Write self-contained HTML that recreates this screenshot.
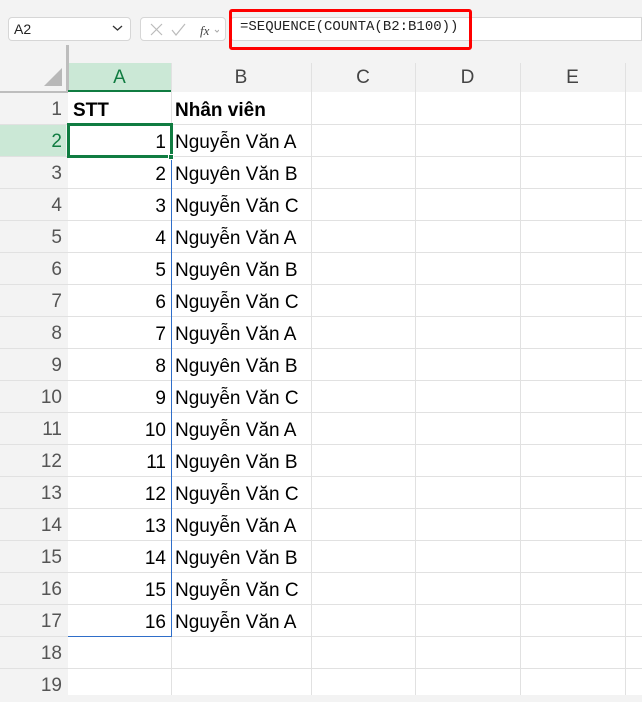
<!DOCTYPE html><html><head><style>
*{margin:0;padding:0;box-sizing:border-box}
body{width:642px;height:695px;overflow:hidden;background:#f3f3f3;font-family:"Liberation Sans",Arial,sans-serif;position:relative}
.abs{position:absolute}
.nb{left:8px;top:17px;width:123px;height:24px;background:#fff;border:1px solid #d6d6d6;border-radius:4px;font-size:14px;padding:3px 0 0 5px;color:#222}
.fxb{left:140px;top:17px;width:86px;height:24px;background:#fff;border:1px solid #d6d6d6;border-radius:4px}
.fin{left:230px;top:17px;width:412px;height:24px;background:#fff;border:1px solid #d6d6d6;border-radius:4px 0 0 4px}
.red{left:229px;top:9px;width:243px;height:41px;border:3px solid #f00;border-radius:3px}
.ftxt{left:240px;top:19px;font-family:"Liberation Mono",monospace;font-size:14px;color:#222}
.grid{left:68px;top:92px;width:574px;height:603px;background:#fff}
.hl{position:absolute;height:1px;background:#e1e1e1}
.vl{position:absolute;width:1px;background:#e1e1e1}
.ch{position:absolute;top:63px;height:29px;font-size:19px;color:#444;text-align:center;line-height:29px}
.rh{position:absolute;left:0;width:62px;text-align:right;font-size:19px;color:#555;line-height:32px;height:32px;padding-top:2px}
.c{position:absolute;font-size:19px;color:#000;line-height:32px;height:32px;padding-top:2px}
</style></head><body>
<div class="abs nb">A2<svg class="abs" style="left:103px;top:6px" width="11" height="8"><path d="M1 2l4.5 4 4.5-4" stroke="#333" stroke-width="1.3" fill="none"/></svg></div>
<div class="abs fxb"><svg class="abs" style="left:8px;top:4px" width="70" height="16"><path d="M2 2l11 11M13 2L2 13" stroke="#bbb" stroke-width="1.2"/><path d="M23 8l4 5 9-11" stroke="#bbb" stroke-width="1.2" fill="none"/><text x="51" y="13" font-size="13" font-style="italic" font-family="Liberation Serif" fill="#444">fx</text><path d="M66 8l2 2 2-2" stroke="#aaa" fill="none"/></svg></div>
<div class="abs fin"></div>
<div class="abs red"></div>
<div class="abs ftxt">=SEQUENCE(COUNTA(B2:B100))</div>
<div class="abs" style="left:66px;top:45px;width:3px;height:47px;background:#bdbdbd"></div>
<div class="abs" style="left:0;top:91px;width:68px;height:2px;background:#bdbdbd"></div>
<svg class="abs" style="left:42px;top:66px" width="22" height="22"><path d="M20 2V20H2Z" fill="#b8b8b8"/></svg>
<div class="abs" style="left:69px;top:63px;width:102px;height:29px;background:#cbe8d6"></div>
<div class="abs" style="left:68px;top:90px;width:104px;height:3px;background:#107c41"></div>
<div class="abs" style="left:0;top:125px;width:66px;height:32px;background:#cbe8d6"></div>
<div class="abs grid"></div>
<div class="ch" style="left:68px;width:103px;color:#107c41">A</div>
<div class="ch" style="left:171px;width:140px">B</div>
<div class="ch" style="left:311px;width:104px">C</div>
<div class="ch" style="left:415px;width:105px">D</div>
<div class="ch" style="left:520px;width:105px">E</div>
<div class="vl" style="left:171px;top:63px;height:29px"></div><div class="vl" style="left:311px;top:63px;height:632px"></div><div class="vl" style="left:415px;top:63px;height:632px"></div><div class="vl" style="left:520px;top:63px;height:632px"></div><div class="vl" style="left:625px;top:63px;height:632px"></div>
<div class="vl" style="left:171px;top:92px;height:603px"></div>
<div class="hl" style="left:0;top:124px;width:642px"></div><div class="hl" style="left:0;top:156px;width:642px"></div><div class="hl" style="left:0;top:188px;width:642px"></div><div class="hl" style="left:0;top:220px;width:642px"></div><div class="hl" style="left:0;top:252px;width:642px"></div><div class="hl" style="left:0;top:284px;width:642px"></div><div class="hl" style="left:0;top:316px;width:642px"></div><div class="hl" style="left:0;top:348px;width:642px"></div><div class="hl" style="left:0;top:380px;width:642px"></div><div class="hl" style="left:0;top:412px;width:642px"></div><div class="hl" style="left:0;top:444px;width:642px"></div><div class="hl" style="left:0;top:476px;width:642px"></div><div class="hl" style="left:0;top:508px;width:642px"></div><div class="hl" style="left:0;top:540px;width:642px"></div><div class="hl" style="left:0;top:572px;width:642px"></div><div class="hl" style="left:0;top:604px;width:642px"></div><div class="hl" style="left:0;top:636px;width:642px"></div><div class="hl" style="left:0;top:668px;width:642px"></div>
<div class="rh" style="top:92px">1</div><div class="rh" style="top:124px;color:#107c41">2</div><div class="rh" style="top:156px">3</div><div class="rh" style="top:188px">4</div><div class="rh" style="top:220px">5</div><div class="rh" style="top:252px">6</div><div class="rh" style="top:284px">7</div><div class="rh" style="top:316px">8</div><div class="rh" style="top:348px">9</div><div class="rh" style="top:380px">10</div><div class="rh" style="top:412px">11</div><div class="rh" style="top:444px">12</div><div class="rh" style="top:476px">13</div><div class="rh" style="top:508px">14</div><div class="rh" style="top:540px">15</div><div class="rh" style="top:572px">16</div><div class="rh" style="top:604px">17</div><div class="rh" style="top:636px">18</div><div class="rh" style="top:668px">19</div>
<div class="c" style="left:73px;top:93px;font-weight:bold">STT</div>
<div class="c" style="left:175px;top:93px;font-weight:bold">Nhân viên</div>
<div class="abs" style="left:68px;top:156px;width:104px;height:481px;border:1px solid #2f6ec9;border-top:none;border-left:none"></div>
<div class="c" style="left:70px;width:96px;text-align:right;top:125px">1</div><div class="c" style="left:175px;top:125px">Nguyễn Văn A</div>
<div class="c" style="left:70px;width:96px;text-align:right;top:157px">2</div><div class="c" style="left:175px;top:157px">Nguyên Văn B</div>
<div class="c" style="left:70px;width:96px;text-align:right;top:189px">3</div><div class="c" style="left:175px;top:189px">Nguyễn Văn C</div>
<div class="c" style="left:70px;width:96px;text-align:right;top:221px">4</div><div class="c" style="left:175px;top:221px">Nguyễn Văn A</div>
<div class="c" style="left:70px;width:96px;text-align:right;top:253px">5</div><div class="c" style="left:175px;top:253px">Nguyên Văn B</div>
<div class="c" style="left:70px;width:96px;text-align:right;top:285px">6</div><div class="c" style="left:175px;top:285px">Nguyễn Văn C</div>
<div class="c" style="left:70px;width:96px;text-align:right;top:317px">7</div><div class="c" style="left:175px;top:317px">Nguyễn Văn A</div>
<div class="c" style="left:70px;width:96px;text-align:right;top:349px">8</div><div class="c" style="left:175px;top:349px">Nguyên Văn B</div>
<div class="c" style="left:70px;width:96px;text-align:right;top:381px">9</div><div class="c" style="left:175px;top:381px">Nguyễn Văn C</div>
<div class="c" style="left:70px;width:96px;text-align:right;top:413px">10</div><div class="c" style="left:175px;top:413px">Nguyễn Văn A</div>
<div class="c" style="left:70px;width:96px;text-align:right;top:445px">11</div><div class="c" style="left:175px;top:445px">Nguyên Văn B</div>
<div class="c" style="left:70px;width:96px;text-align:right;top:477px">12</div><div class="c" style="left:175px;top:477px">Nguyễn Văn C</div>
<div class="c" style="left:70px;width:96px;text-align:right;top:509px">13</div><div class="c" style="left:175px;top:509px">Nguyễn Văn A</div>
<div class="c" style="left:70px;width:96px;text-align:right;top:541px">14</div><div class="c" style="left:175px;top:541px">Nguyên Văn B</div>
<div class="c" style="left:70px;width:96px;text-align:right;top:573px">15</div><div class="c" style="left:175px;top:573px">Nguyễn Văn C</div>
<div class="c" style="left:70px;width:96px;text-align:right;top:605px">16</div><div class="c" style="left:175px;top:605px">Nguyễn Văn A</div>
<div class="abs" style="left:67px;top:123px;width:106px;height:35px;border:3px solid #107c41"></div>
<div class="abs" style="left:168px;top:154px;width:6px;height:6px;background:#107c41;border:1px solid #fff"></div>
</body></html>
